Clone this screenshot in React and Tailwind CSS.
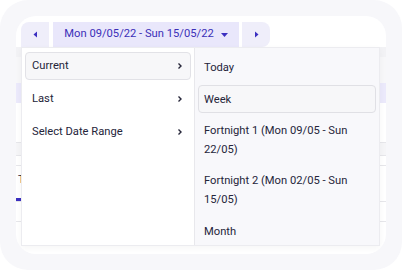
import React from "react";

const leftItems = ["Current", "Last", "Select Date Range"];

const rightItems = [
  { label: "Today" },
  { label: "Week", active: true },
  { label: "Fortnight 1 (Mon 09/05 - Sun 22/05)" },
  { label: "Fortnight 2 (Mon 02/05 - Sun 15/05)" },
  { label: "Month" },
];

const Chevron = () => (
  <svg width="6" height="8" viewBox="0 0 6 8" fill="none">
    <path d="M1.5 1.5l2.5 2.5-2.5 2.5" stroke="#27273a" strokeWidth="1.4" />
  </svg>
);

const App = () => {
  return (
    <div
      className="w-[402px] h-[270px] bg-white text-[#25253a]"
      style={{ fontFamily: "Roboto, 'Liberation Sans', sans-serif" }}
    >
      <div className="w-full h-full rounded-[28px] bg-[#f7f7fa] p-4">
        <div className="relative w-full h-full bg-white rounded-[20px] overflow-hidden pt-[6px]">
          {/* date navigator */}
          <div className="flex h-[25px] px-[5px] gap-[3px]">
            <button className="w-[28px] h-full bg-[#efeefa] rounded-tl-[8px] flex items-center justify-center">
              <svg width="5" height="7" viewBox="0 0 5 7">
                <path d="M4 0.5v6L0.5 3.5z" fill="#3b2fc0" />
              </svg>
            </button>
            <button className="ml-[1px] w-[186px] h-full bg-[#e9e7fb] flex items-center justify-center gap-[7px] text-[11.2px] text-[#3b2fb8]">
              Mon 09/05/22 - Sun 15/05/22
              <svg width="7" height="4" viewBox="0 0 7 4">
                <path d="M0 0h7L3.5 4z" fill="#3b2fc0" />
              </svg>
            </button>
            <button className="w-[28px] h-full bg-[#efeefa] rounded-r-[8px] flex items-center justify-center">
              <svg width="5" height="7" viewBox="0 0 5 7">
                <path d="M1 0.5v6l3.5-3z" fill="#3b2fc0" />
              </svg>
            </button>
          </div>

          {/* table behind the menu */}
          <div className="flex flex-col">
            <div className="h-[10px] bg-[#f2f2f5]" />
            <div className="h-[26px] bg-[#f7f7f9]" />
            <div className="h-[20px] bg-[#ebe9fb]" />
            <div className="h-[40px] bg-white border-b border-[#e6e6ea]" />
            <div className="h-[13px] bg-[#f5f5f7] border-b border-[#e6e6ea]" />
            <div className="h-[10px] bg-white border-b border-[#e6e6ea]" />
            <div className="h-[36px] bg-white border-b border-[#e6e6ea] relative">
              <span className="absolute left-[2px] top-[6px] text-[11px]">T</span>
              <div className="absolute left-0 bottom-0 w-[6px] h-[3px] bg-[#3b2fc0]" />
            </div>
            <div className="h-[20px] bg-white border-b border-[#e6e6ea]" />
          </div>

          {/* dropdown menu */}
          <div className="absolute left-[5px] top-[31px] w-[359px] h-[199px] flex border border-[#ececf0] shadow-[0_2px_6px_rgba(0,0,0,0.04)] text-[11.2px]">
            <div className="w-[173px] h-full bg-white border-r border-[#e8e8ec] px-[3px] pt-[4px] flex flex-col gap-[5px]">
              {leftItems.map((item, i) => (
                <div
                  key={item}
                  className={
                    "h-[28px] flex items-center justify-between pl-[6px] pr-[7px] rounded-[4px] border " +
                    (i === 0
                      ? "bg-[#f7f7f9] border-[#e2e2e7]"
                      : "border-transparent")
                  }
                >
                  <span>{item}</span>
                  <Chevron />
                </div>
              ))}
            </div>
            <div className="flex-1 h-full bg-[#f8f8fb] px-[3px] pt-[5px] flex flex-col gap-[4px]">
              {rightItems.map((item) => (
                <div
                  key={item.label}
                  className={
                    "min-h-[28px] flex items-center pl-[5px] pr-[22px] py-[4px] rounded-[4px] border leading-[19px] " +
                    (item.active
                      ? "bg-[#f7f7f9] border-[#e0e0e5]"
                      : "border-transparent")
                  }
                >
                  {item.label}
                </div>
              ))}
            </div>
          </div>
        </div>
      </div>
    </div>
  );
};

export default App;
